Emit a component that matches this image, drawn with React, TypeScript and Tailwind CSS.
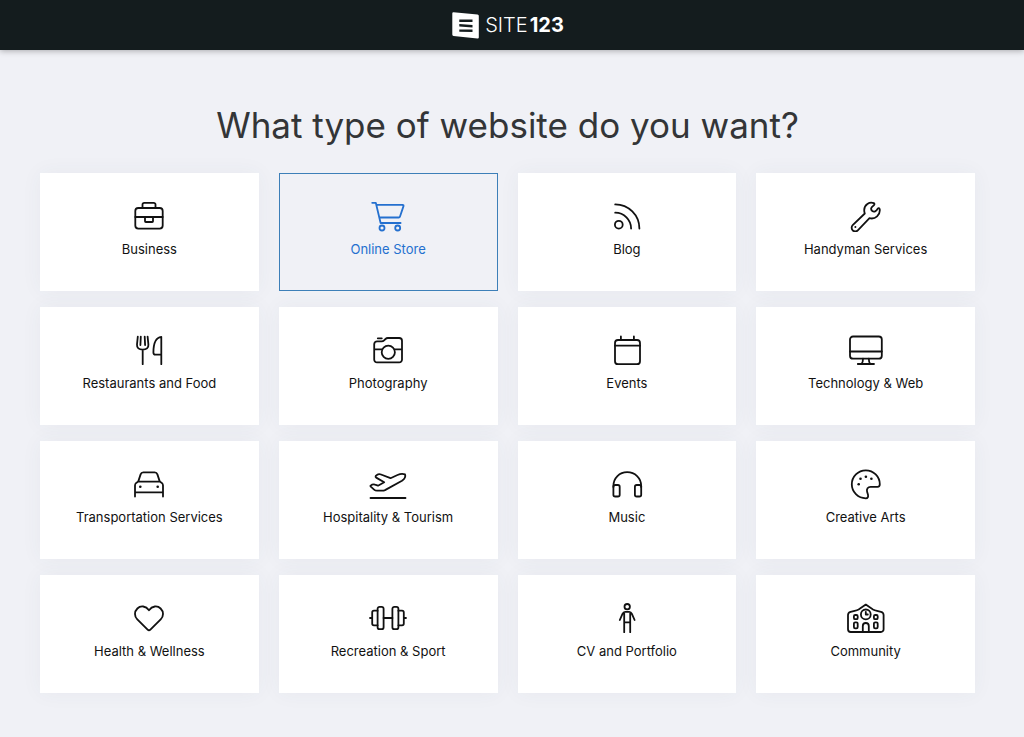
import { useState } from "react";
import type { ReactNode } from "react";

type Category = { name: string; icon: ReactNode };

const categories: Category[] = [
  {
    name: "Business",
    icon: (
      <>
        <rect x="6.3" y="8" width="27.4" height="20.6" rx="3" />
        <path d="M13.5 8V4.6a1.8 1.8 0 0 1 1.8-1.8h9.4a1.8 1.8 0 0 1 1.8 1.8V8M6.3 17h27.4M16 17v4.2a.8.8 0 0 0 .8.8h6.4a.8.8 0 0 0 .8-.8V17" />
      </>
    ),
  },
  {
    name: "Online Store",
    icon: (
      <>
        <path d="M4.2 2.8h3.6l4.8 20.2h20M8.3 4.8h26.2q1.3 0 1 1.3L32 16.5q-.3 1-1.3 1H11.3" />
        <circle cx="14" cy="28" r="2.5" />
        <circle cx="29.7" cy="28" r="2.5" />
      </>
    ),
  },
  {
    name: "Blog",
    icon: (
      <>
        <path d="M8.2 4.4C21.6 4.4 32.4 15.2 32.4 28.6M8.2 12.7C17 12.7 24.1 19.8 24.1 28.6" />
        <circle cx="11.8" cy="24.7" r="3.9" />
      </>
    ),
  },
  {
    name: "Handyman Services",
    icon: (
      <>
        <path d="M27.8 3.1C23.5 1.4 18.2 4.6 18.2 10c0 1.4.2 2.5.6 3.5L6.7 25.2a3.6 3.6 0 0 0 5.1 5.1L23.5 18.2c5.8 1.5 11-3.2 10.2-9.1-.3-1.2-1.4-1.3-2-.4-1.5 2.6-3.6 3.6-5.4 2.3-1.9-1.5-1.5-3.8 1.3-5.6 1.1-.8 1.1-1.8.2-2.3Z" />
        <circle cx="9.4" cy="27.1" r="1" fill="currentColor" stroke="none" />
      </>
    ),
  },
  {
    name: "Restaurants and Food",
    icon: (
      <path d="M8.8 2.6L8 10.5C7.7 14 10 15.6 13.7 15.6S19.7 14 19.4 10.5L18.6 2.6M11.8 2.6L11.4 11M15.7 2.6L16.1 11M13.7 15.6V30.2M32.3 30.2V2.8C27 3.4 24.4 9 24.4 18.5c0 1.4.6 2.2 2 2.2h5.9" />
    ),
  },
  {
    name: "Photography",
    icon: (
      <>
        <path d="M9 7.4h4.6c1 0 1.8-.3 2.5-1L17.5 5c.7-.7 1.4-1 2.4-1H31.2a2.8 2.8 0 0 1 2.8 2.8V25.6a2.8 2.8 0 0 1-2.8 2.8H9a2.8 2.8 0 0 1-2.8-2.8V10.2A2.8 2.8 0 0 1 9 7.4ZM9.8 4.3h4M6.2 15.4h8M26.6 15.4H34" />
        <circle cx="20.3" cy="18.3" r="6.6" />
      </>
    ),
  },
  {
    name: "Events",
    icon: (
      <>
        <rect x="8" y="6" width="25" height="24.2" rx="3" />
        <path d="M8 11.7h25M13.9 6V2.4M26.9 6V2.4" />
      </>
    ),
  },
  {
    name: "Technology & Web",
    icon: (
      <>
        <rect x="4" y="2.5" width="31.8" height="22.2" rx="3" />
        <path d="M4 17.5H35.8M17 24.7c0 2.3-.4 4.3-1.6 5.3M22.8 24.7c0 2.3.4 4.3 1.6 5.3M11.8 30H28" />
      </>
    ),
  },
  {
    name: "Transportation Services",
    icon: (
      <>
        <path d="M6 28.5V17.5c0-1.3.5-2 1.2-2.6L9.2 13.6l2.4-7.2c.5-1.5 1.2-2.1 2.7-2.1h11.4c1.5 0 2.2.6 2.7 2.1l2.4 7.2 2 1.3c.7.6 1.2 1.3 1.2 2.6V28.5M9.2 13.6H30.8M6 24.4H34" />
        <circle cx="11.3" cy="18.8" r="1.3" fill="currentColor" stroke="none" />
        <circle cx="28.7" cy="18.8" r="1.3" fill="currentColor" stroke="none" />
      </>
    ),
  },
  {
    name: "Hospitality & Tourism",
    icon: (
      <path d="M2.5 30H37.5M2.6 17.6C4 16.5 5.5 16.1 7 16.7L10 17.7 16.2 14.3 8.2 9.6C7.2 8.8 7.5 7.8 8.5 7.2 10 6.2 11.5 5.9 13 6.5L22.5 10.2 29.5 7C32 5.8 35 5.5 37 6.4 38 9 36.5 11 34 12.7L17 22.1C16 22.6 15.2 22.7 14 22.7H9C7.8 22.7 7 22.4 6.1 21.6L2.8 18.6C2.4 18.2 2.3 17.9 2.6 17.6Z" />
    ),
  },
  {
    name: "Music",
    icon: (
      <>
        <path d="M6.4 19V18C6.4 10 12.5 4.2 20.2 4.2S34.2 10 34.2 18V19" />
        <rect x="6.4" y="17" width="6.3" height="11.5" rx="1.8" />
        <rect x="27.9" y="17" width="6.3" height="11.5" rx="1.8" />
      </>
    ),
  },
  {
    name: "Creative Arts",
    icon: (
      <>
        <path d="M33.8 16.3A14 14 0 1 0 19.8 30.3C21.9 30.3 22.4 28.7 22 26.8L21.1 23.7C20.3 20.8 21.9 18.8 24.6 18.8H31.6C33.2 18.8 33.8 17.9 33.8 16.3Z" />
        <g fill="currentColor" stroke="none">
          <circle cx="12.7" cy="16.3" r="1.3" />
          <circle cx="14.5" cy="10.8" r="1.3" />
          <circle cx="19.9" cy="8.8" r="1.3" />
          <circle cx="25.4" cy="10.8" r="1.3" />
        </g>
      </>
    ),
  },
  {
    name: "Health & Wellness",
    icon: (
      <path d="M20 8.3C16.8 3.8 11.6 3.3 8.4 6.5 5.2 9.7 5.2 14.2 8.3 17.3L18.6 27.6C19.5 28.5 20.5 28.5 21.4 27.6L31.7 17.3C34.8 14.2 34.8 9.7 31.6 6.5 28.4 3.3 23.2 3.8 20 8.3Z" />
    ),
  },
  {
    name: "Recreation & Sport",
    icon: (
      <>
        <rect x="9.6" y="4.8" width="6" height="22.4" rx="2" />
        <rect x="24.4" y="4.8" width="6" height="22.4" rx="2" />
        <path d="M9.6 8.7H6a1.8 1.8 0 0 0-1.8 1.8V21.5A1.8 1.8 0 0 0 6 23.3H9.6M30.4 8.7H34a1.8 1.8 0 0 1 1.8 1.8V21.5A1.8 1.8 0 0 1 34 23.3H30.4M2 16H4.2M15.6 16h8.8M35.8 16H38" />
      </>
    ),
  },
  {
    name: "CV and Portfolio",
    icon: (
      <>
        <circle cx="20.2" cy="4.7" r="2.7" />
        <path d="M12.8 18L15.5 11.8C16.2 10.3 17 9.8 18.2 9.8H22.2C23.4 9.8 24.2 10.3 24.9 11.8L27.6 18M17.2 10.5V30.2M23.2 10.5V30.2M17.2 20.4H23.2" />
      </>
    ),
  },
  {
    name: "Community",
    icon: (
      <>
        <path d="M19.8 2.6L27 7.4C28.3 8.2 29.5 8.5 31 8.8L35 9.8C36.8 10.3 37.6 11.4 37.6 13V27.3A2.7 2.7 0 0 1 34.9 30H4.7A2.7 2.7 0 0 1 2 27.3V13C2 11.4 2.8 10.3 4.6 9.8L8.6 8.8C10.1 8.5 11.3 8.2 12.6 7.4ZM16.8 30V24a3 3 0 0 1 6 0V30M19.8 9.8V12.5H21.8" />
        <circle cx="19.8" cy="12.4" r="4.9" />
        <rect x="7.9" y="13" width="3.8" height="4.2" rx="1.3" />
        <rect x="27.9" y="13" width="3.8" height="4.2" rx="1.3" />
        <rect x="7.9" y="20.3" width="3.8" height="6" rx="1.3" />
        <rect x="27.9" y="20.3" width="3.8" height="6" rx="1.3" />
      </>
    ),
  },
];

function Logo() {
  return (
    <a href="#" className="flex items-center gap-1.5 text-white">
      <svg viewBox="0 0 27 28" className="h-7 w-[27px]" aria-hidden="true">
        <path d="M1.5 1.3L25.5 3.4Q26.8 3.5 26.8 4.8V26.4Q26.8 27.7 25.5 27.5L1.5 25Q.3 24.8 .3 23.5V2.5Q.3 1.2 1.5 1.3Z" fill="#fff" />
        <path d="M7.3 8.4L20.5 8.6V11L7.3 11ZM7.3 13L20.5 14V16.4L7.3 15.4ZM7.3 18.4L20.5 18.6V21.1L7.3 20.8Z" fill="#141c1e" />
      </svg>
      <span className="text-[20px] leading-7 font-light">
        SITE<span className="ml-0.5 font-bold">123</span>
      </span>
    </a>
  );
}

export default function App() {
  const [selected, setSelected] = useState("Online Store");

  return (
    <div className="min-h-screen bg-[#f0f1f6] font-['Inter','Liberation_Sans',sans-serif]">
      <header className="flex h-[50px] items-center justify-center bg-[#141c1e] pr-2 shadow-[0_1px_6px_rgba(0,0,0,0.3)]">
        <Logo />
      </header>
      <main className="pt-[53px] pr-[49px] pb-11 pl-10">
        <h1 className="mb-[26px] text-center text-[35px] leading-[44px] font-normal text-[#333537]">
          What type of website do you want?
        </h1>
        <div className="grid grid-cols-4 gap-x-5 gap-y-4">
          {categories.map(({ name, icon }) => {
            const active = name === selected;
            return (
              <button
                key={name}
                type="button"
                aria-pressed={active}
                onClick={() => setSelected(name)}
                className={`flex flex-col items-center gap-[7px] border pt-[26px] pb-[31px] text-[13px] leading-5 ${
                  active
                    ? "relative border-[#3d7fb8] bg-[#f0f1f6] text-[#2470cf]"
                    : "border-white bg-white text-[#111] shadow-[0_0_20px_rgba(60,70,90,0.05)]"
                }`}
              >
                <svg
                  viewBox="0 0 40 32"
                  className="h-8 w-10"
                  fill="none"
                  stroke="currentColor"
                  strokeWidth="1.8"
                  strokeLinecap="round"
                  strokeLinejoin="round"
                  aria-hidden="true"
                >
                  {icon}
                </svg>
                {name}
              </button>
            );
          })}
        </div>
      </main>
    </div>
  );
}
